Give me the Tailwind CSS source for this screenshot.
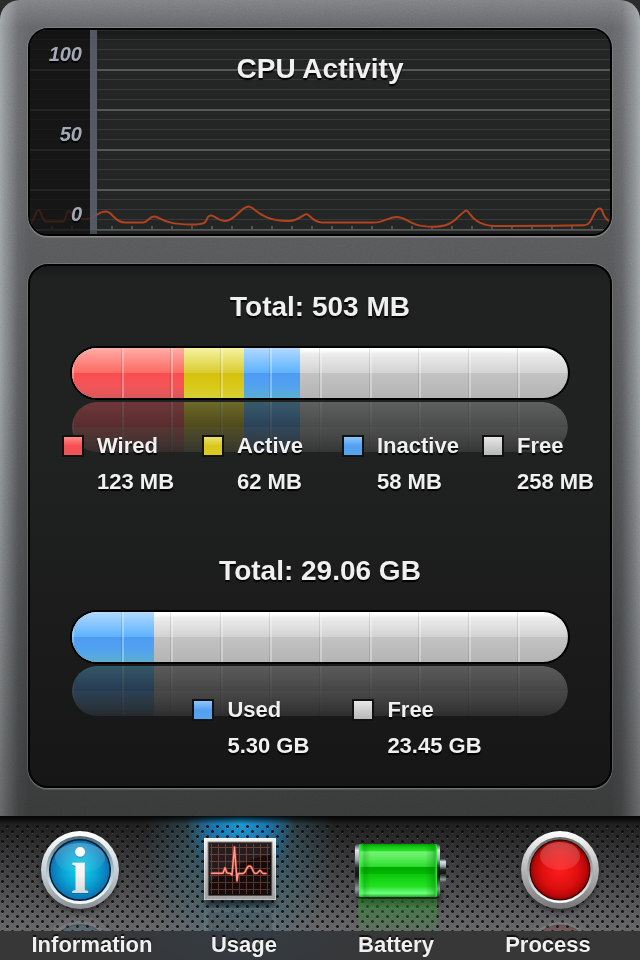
<!DOCTYPE html>
<html lang="en">
<head>
<meta charset="utf-8">
<meta name="viewport" content="width=device-width, initial-scale=1">
<title>Usage</title>
<script src="https://cdn.jsdelivr.net/npm/@tailwindcss/browser@4"></script>
</head>
<body class="flex min-h-screen flex-col bg-[#2c2c2d] font-['Liberation_Sans',Helvetica,Arial,sans-serif] font-bold text-[#f0f0f0]">

<main class="relative flex flex-1 flex-col gap-7 overflow-hidden rounded-t-[20px] bg-[linear-gradient(to_bottom,#808185_0,#646568_28px,#606163_120px,#58595b_250px,#454647_560px,#383939_100%)] p-7">
  <div class="absolute inset-0 bg-[linear-gradient(to_right,rgb(200_208_210/0.62)_0,rgb(190_196_200/0.5)_5px,rgb(150_155_160/0.16)_18px,transparent_30px,transparent_calc(100%-30px),rgb(150_155_160/0.16)_calc(100%-18px),rgb(190_196_200/0.5)_calc(100%-5px),rgb(200_208_210/0.62)_100%)] [mask-image:linear-gradient(to_bottom,#000_45%,rgb(0_0_0/0.5))]"></div>
  <svg class="absolute inset-0 size-full opacity-15 mix-blend-overlay" aria-hidden="true">
    <filter id="grain"><feTurbulence type="fractalNoise" baseFrequency="0.7" numOctaves="2" stitchTiles="stitch"/><feColorMatrix type="saturate" values="0"/></filter>
    <rect width="100%" height="100%" filter="url(#grain)"/>
  </svg>

  <section class="relative overflow-hidden rounded-[20px] border-2 border-black bg-[#242525] shadow-[0_0_0_1px_rgb(255_255_255/0.15),0_2px_0_rgb(255_255_255/0.15)]" aria-labelledby="cpu-title">
    <svg class="block w-full" viewBox="2 2 580 204" role="img" aria-label="CPU activity over time">
      <defs>
        <pattern id="minor" width="584" height="40" patternUnits="userSpaceOnUse" y="1">
          <path d="M0 10.5H584M0 20.5H584M0 30.5H584" stroke="#383939"/>
          <path d="M0 1H584" stroke="#565757" stroke-width="2"/>
        </pattern>
        <pattern id="ticks" x="3" width="20" height="4" y="198" patternUnits="userSpaceOnUse"><rect width="2" height="3" fill="#515252"/></pattern>
        <linearGradient id="topshade" x2="0" y2="1"><stop stop-color="#000" stop-opacity=".35"/><stop offset="1" stop-color="#000" stop-opacity="0"/></linearGradient>
      </defs>
      <rect width="584" height="208" fill="#242525"/>
      <rect y="4" width="584" height="204" fill="url(#minor)"/>
      <rect y="198" width="584" height="3" fill="url(#ticks)"/>
      <rect y="2" width="584" height="1" fill="#444"/>
      <rect y="2" width="584" height="14" fill="url(#topshade)"/>
      <path id="trace" fill="none" stroke="#b1431f" stroke-width="2" stroke-linejoin="round" d="M2 196C6 193 8 182 10.700 182S14 193.500 18 193.500H35C38 193.500 38 183 41 183S44 191 49 191H58C67 191 70 183.500 77.500 183.500C85 183.500 86 194.500 97 194.500H115C120 194.500 121 188.500 126 188.500C133 188.500 134 196.500 163 196.500C181 196.500 177 193 180 189C184 184 189 193 197 193C207 193 213 178.500 220.500 178.500C227 178.500 231 193 261 193C270 193 276 186 278.500 186S285 194.500 294 194.500H346C356 194.500 360 189 368.500 189C380 189 380 198.700 405 198.700C418 198.700 423 195 427 192C432 187 437 182.500 438.700 182.500C441 182.500 445 198 467 198L525 197.800L556 197.200C565 197.500 565 180.500 571.500 180.500C576 180.500 573 188 581 193"/>
      <rect width="62" height="208" fill="#101010" fill-opacity=".72"/>
      <rect x="62" width="7" height="208" fill="#5a5d68" fill-opacity=".92"/>
      <rect y="202" width="584" height="6" fill="#111" fill-opacity=".2"/>
    </svg>
    <div class="absolute inset-y-0 left-0 flex w-[52px] flex-col justify-between pt-1 text-right text-[20px] leading-10 text-[#a3a9b8] italic [text-shadow:0_2px_1px_#000]">
      <span>100</span><span>50</span><span>0</span>
    </div>
    <h2 id="cpu-title" class="absolute inset-x-0 top-[21px] text-center text-[28px] leading-9 [text-shadow:0_2px_1px_#000]">CPU Activity</h2>
  </section>

  <div class="relative flex flex-1 flex-col gap-[53px] rounded-[20px] border-2 border-black bg-[linear-gradient(to_bottom,#191a1a,#202222_14px,#202121_35%,#161616)] pt-[23px] pb-5 shadow-[0_0_0_1px_rgb(255_255_255/0.15),0_2px_0_rgb(255_255_255/0.15)] [text-shadow:0_2px_1px_#000]">
    <section>
      <h2 class="text-center text-[28px] leading-9">Total: 503 MB</h2>
      <div class="relative mx-[42px] mt-[23px]">
        <div class="relative flex h-[50px] overflow-hidden rounded-full bg-[linear-gradient(to_bottom,#fff_0,#fff_4%,#ececec_12%,#d2d2d2_50%,#c3c3c3_50%,#b4b4b4)] shadow-[0_0_0_2px_#000]">
          <div class="bg-[linear-gradient(to_bottom,#ffb0aa,#ff9b95_12%,#fb6c63_50%,#f84e52_50%,#f45558_75%,#d9585c)]" style="width:22.6%"></div>
          <div class="bg-[linear-gradient(to_bottom,#f6f2a4,#efe985_12%,#dbcc30_50%,#d4bf10_50%,#d9c916_75%,#d8cf38)]" style="width:12.1%"></div>
          <div class="bg-[linear-gradient(to_bottom,#b4daff,#9bcfff_12%,#5db3fc_50%,#4d9cf3_50%,#52a2f0_75%,#5aaecf)]" style="width:11.3%"></div>
          <div class="absolute inset-0 bg-[repeating-linear-gradient(to_right,rgb(255_255_255/0.3)_0,rgb(255_255_255/0.3)_2px,transparent_2px,transparent_calc(10%-1px),rgb(0_0_0/0.1)_calc(10%-1px),rgb(0_0_0/0.1)_10%)]"></div>
        </div>
        <div aria-hidden="true" class="absolute inset-x-0 top-full mt-1 flex h-[50px] -scale-y-100 overflow-hidden rounded-full bg-[linear-gradient(to_bottom,#ececec,#d2d2d2_50%,#c3c3c3_50%,#b4b4b4)] [mask-image:linear-gradient(to_top,rgb(0_0_0/0.42),rgb(0_0_0/0.1))]">
          <div class="bg-[linear-gradient(to_bottom,#ff9b95,#fb6c63_50%,#f84e52_50%,#d9585c)]" style="width:22.6%"></div>
          <div class="bg-[linear-gradient(to_bottom,#efe985,#dbcc30_50%,#d4bf10_50%,#d8cf38)]" style="width:12.1%"></div>
          <div class="bg-[linear-gradient(to_bottom,#9bcfff,#5db3fc_50%,#4d9cf3_50%,#5aaecf)]" style="width:11.3%"></div>
          <div class="absolute inset-0 bg-[repeating-linear-gradient(to_right,rgb(255_255_255/0.3)_0,rgb(255_255_255/0.3)_2px,transparent_2px,transparent_calc(10%-1px),rgb(0_0_0/0.1)_calc(10%-1px),rgb(0_0_0/0.1)_10%)]"></div>
        </div>
      </div>
      <dl class="relative mt-[30px] grid grid-cols-[1fr_1fr_1fr_auto] pr-4 pl-8 text-[22px] leading-9">
        <div>
          <dt class="flex items-center gap-[13px]"><span class="size-[22px] border-2 border-[#111] bg-[linear-gradient(to_bottom,#ff9b95,#f84e52_50%,#e85a5c)] bg-origin-border"></span>Wired</dt>
          <dd class="pl-[35px]">123 MB</dd>
        </div>
        <div>
          <dt class="flex items-center gap-[13px]"><span class="size-[22px] border-2 border-[#111] bg-[linear-gradient(to_bottom,#efe985,#d9c61c_50%,#dccb22)] bg-origin-border"></span>Active</dt>
          <dd class="pl-[35px]">62 MB</dd>
        </div>
        <div>
          <dt class="flex items-center gap-[13px]"><span class="size-[22px] border-2 border-[#111] bg-[linear-gradient(to_bottom,#9bcfff,#559ff2_50%,#53a8ee)] bg-origin-border"></span>Inactive</dt>
          <dd class="pl-[35px]">58 MB</dd>
        </div>
        <div>
          <dt class="flex items-center gap-[13px]"><span class="size-[22px] border-2 border-[#111] bg-[linear-gradient(to_bottom,#ececec,#c9c9c9_60%,#b4b4b4)] bg-origin-border"></span>Free</dt>
          <dd class="pl-[35px]">258 MB</dd>
        </div>
      </dl>
    </section>

    <section>
      <h2 class="text-center text-[28px] leading-9">Total: 29.06 GB</h2>
      <div class="relative mx-[42px] mt-[23px]">
        <div class="relative flex h-[50px] overflow-hidden rounded-full bg-[linear-gradient(to_bottom,#fff_0,#fff_4%,#ececec_12%,#d2d2d2_50%,#c3c3c3_50%,#b4b4b4)] shadow-[0_0_0_2px_#000]">
          <div class="bg-[linear-gradient(to_bottom,#b4daff,#9bcfff_12%,#5db3fc_50%,#4d9cf3_50%,#52a2f0_75%,#5aaecf)]" style="width:16.6%"></div>
          <div class="absolute inset-0 bg-[repeating-linear-gradient(to_right,rgb(255_255_255/0.3)_0,rgb(255_255_255/0.3)_2px,transparent_2px,transparent_calc(10%-1px),rgb(0_0_0/0.1)_calc(10%-1px),rgb(0_0_0/0.1)_10%)]"></div>
        </div>
        <div aria-hidden="true" class="absolute inset-x-0 top-full mt-1 flex h-[50px] -scale-y-100 overflow-hidden rounded-full bg-[linear-gradient(to_bottom,#ececec,#d2d2d2_50%,#c3c3c3_50%,#b4b4b4)] [mask-image:linear-gradient(to_top,rgb(0_0_0/0.42),rgb(0_0_0/0.1))]">
          <div class="bg-[linear-gradient(to_bottom,#9bcfff,#5db3fc_50%,#4d9cf3_50%,#5aaecf)]" style="width:16.6%"></div>
          <div class="absolute inset-0 bg-[repeating-linear-gradient(to_right,rgb(255_255_255/0.3)_0,rgb(255_255_255/0.3)_2px,transparent_2px,transparent_calc(10%-1px),rgb(0_0_0/0.1)_calc(10%-1px),rgb(0_0_0/0.1)_10%)]"></div>
        </div>
      </div>
      <dl class="relative mt-[30px] flex justify-center gap-[43px] pl-[34px] text-[22px] leading-9">
        <div>
          <dt class="flex items-center gap-[13px]"><span class="size-[22px] border-2 border-[#111] bg-[linear-gradient(to_bottom,#9bcfff,#559ff2_50%,#53a8ee)] bg-origin-border"></span>Used</dt>
          <dd class="pl-[35px]">5.30 GB</dd>
        </div>
        <div>
          <dt class="flex items-center gap-[13px]"><span class="size-[22px] border-2 border-[#111] bg-[linear-gradient(to_bottom,#ececec,#c9c9c9_60%,#b4b4b4)] bg-origin-border"></span>Free</dt>
          <dd class="pl-[35px]">23.45 GB</dd>
        </div>
      </dl>
    </section>
  </div>
</main>

<nav aria-label="Sections">
  <div class="relative grid grid-cols-4 overflow-hidden bg-[radial-gradient(ellipse_54px_64px_at_37.5%_5%,#1a9bd6,rgb(24_125_190/0.85)_50%,transparent),radial-gradient(ellipse_96px_130px_at_37.5%_30%,rgb(30_110_150/0.7),rgb(60_115_130/0.4)_55%,transparent),linear-gradient(to_bottom,#1a1a1a,#3c3c3e_40%,#68686a)]">
    <svg class="absolute inset-0 size-full" aria-hidden="true">
      <defs>
        <pattern id="mesh" width="10" height="10" patternUnits="userSpaceOnUse" patternTransform="translate(5 8)">
          <path d="M2 4h1v1h-1zM7 9h1v1h-1z" fill="#fff" fill-opacity=".16"/>
          <path d="M1 1h3v3h-3zM6 6h3v3h-3z" fill="#0a0a0a" fill-opacity=".4"/>
          <path d="M2 1h1v3h-1zM1 2h3v1h-3zM7 6h1v3h-1zM6 7h3v1h-3z" fill="#0a0a0a" fill-opacity=".85"/>
        </pattern>
        <linearGradient id="lip" x2="0" y2="1"><stop stop-color="#000" stop-opacity=".9"/><stop offset="1" stop-color="#000" stop-opacity="0"/></linearGradient>
      </defs>
      <rect y="8" width="100%" height="107" fill="url(#mesh)"/>
      <rect width="100%" height="8" fill="url(#lip)"/>
    </svg>

    <a href="#information" aria-labelledby="nav-info" class="relative flex justify-center">
      <svg class="h-[115px] w-40" viewBox="0 0 160 115" aria-hidden="true">
        <defs>
          <linearGradient id="i1" x2="0" y2="1"><stop stop-color="#fff"/><stop offset=".5" stop-color="#c9d2d8"/><stop offset="1" stop-color="#8b8f93"/></linearGradient>
          <linearGradient id="i2" x2="0" y2="1"><stop stop-color="#4d6b78"/><stop offset=".4" stop-color="#8fb4c2"/><stop offset=".75" stop-color="#cfe8f0"/><stop offset="1" stop-color="#f2fcff"/></linearGradient>
          <radialGradient id="i3"><stop stop-color="#12d2ee"/><stop offset=".55" stop-color="#0aa6d6"/><stop offset="1" stop-color="#0a72b2"/></radialGradient>
          <linearGradient id="i4" x2="0" y2="1"><stop stop-color="#fff" stop-opacity=".25"/><stop offset="1" stop-color="#fff" stop-opacity=".03"/></linearGradient>
          <linearGradient id="i5" x2="0" y2="1"><stop stop-color="#fff"/><stop offset=".55" stop-color="#f4f4f4"/><stop offset="1" stop-color="#bfc4c8"/></linearGradient>
          <filter id="soft" x="-30%" y="-30%" width="160%" height="160%"><feGaussianBlur stdDeviation="3"/></filter>
        </defs>
        <circle cx="80" cy="57" r="38" fill="#000" opacity=".6" filter="url(#soft)"/>
        <g id="info-icon">
          <circle cx="80" cy="54" r="39" fill="url(#i1)"/>
          <circle cx="80" cy="54" r="34" fill="url(#i2)"/>
          <circle cx="80" cy="54" r="31" fill="#06182b"/>
          <circle cx="80" cy="54" r="29.500" fill="url(#i3)"/>
          <ellipse cx="80" cy="42" rx="25" ry="15" fill="url(#i4)"/>
          <text x="80" y="78" text-anchor="middle" font-family="Liberation Serif, serif" font-weight="bold" font-size="66" fill="#045a86" opacity=".5">i</text>
          <text x="80" y="77" text-anchor="middle" font-family="Liberation Serif, serif" font-weight="bold" font-size="66" fill="url(#i5)">i</text>
        </g>
        <use href="#info-icon" transform="translate(0 193) scale(1 -1)" opacity=".14"/>
      </svg>
    </a>

    <a href="#usage" aria-labelledby="nav-usage" aria-current="page" class="relative flex justify-center">
      <svg class="h-[115px] w-40" viewBox="0 0 160 115" aria-hidden="true">
        <defs>
          <linearGradient id="u1" x2="0" y2="1"><stop stop-color="#f2f2f2"/><stop offset=".5" stop-color="#c2c2c2"/><stop offset="1" stop-color="#a2a2a2"/></linearGradient>
          <pattern id="ugrid" x="51" y="31" width="7" height="7" patternUnits="userSpaceOnUse"><path d="M.5 0V7M0 .5H7" stroke="#5c322f"/></pattern>
        </defs>
        <rect x="46" y="28" width="68" height="62" fill="#000" opacity=".55" filter="url(#soft)"/>
        <g id="usage-icon">
          <rect x="44" y="22" width="72" height="62" fill="url(#u1)"/>
          <rect x="44.500" y="22.500" width="71" height="61" fill="none" stroke="#fff" stroke-opacity=".4"/>
          <rect x="47.500" y="25.500" width="65" height="54.500" fill="#8a8a8a"/>
          <rect x="48.500" y="26.500" width="63" height="53" fill="#150c0c"/>
          <rect x="50" y="28" width="60" height="50" fill="url(#ugrid)"/>
          <path d="M48.500 26.500h63v12q-34 6-63 28z" fill="#fff" opacity=".07"/>
          <g fill="none" stroke-linejoin="round" stroke-linecap="round">
            <path d="M51.700 57.300H63l2-5.500 2 5.200 3.500.5 1.500 1.500 2.500-28 2.500 34 1-7.500h5c3 0 3-7.500 6.500-7.500s3 7.500 6 7.500 3-3 4.500-3 1.500 3 3.500 3h2.500" stroke="#e0382c" stroke-width="3" opacity=".45"/>
            <path d="M51.700 57.300H63l2-5.500 2 5.200 3.500.5 1.500 1.500 2.500-28 2.500 34 1-7.500h5c3 0 3-7.500 6.500-7.500s3 7.500 6 7.500 3-3 4.500-3 1.500 3 3.500 3h2.500" stroke="#ff9a88" stroke-width="1.500"/>
          </g>
        </g>
        <use href="#usage-icon" transform="translate(0 176) scale(1 -1)" opacity=".1"/>
      </svg>
    </a>

    <a href="#battery" aria-labelledby="nav-battery" class="relative flex justify-center">
      <svg class="h-[115px] w-40" viewBox="0 0 160 115" aria-hidden="true">
        <defs>
          <linearGradient id="b1" x2="0" y2="1"><stop stop-color="#0b9a0b"/><stop offset=".06" stop-color="#12d012"/><stop offset=".12" stop-color="#25dc25"/><stop offset=".15" stop-color="#74f474"/><stop offset=".3" stop-color="#52ea52"/><stop offset=".43" stop-color="#2bdc2b"/><stop offset=".44" stop-color="#00a800"/><stop offset=".56" stop-color="#02b802"/><stop offset=".57" stop-color="#0cc80c"/><stop offset=".8" stop-color="#22e222"/><stop offset=".93" stop-color="#72ff85"/><stop offset="1" stop-color="#11b511"/></linearGradient>
          <linearGradient id="b2"><stop stop-color="#3f4"/><stop offset=".03" stop-color="#3f4" stop-opacity=".2"/><stop offset=".07" stop-color="#050" stop-opacity=".2"/><stop offset=".15" stop-color="#050" stop-opacity="0"/><stop offset=".85" stop-color="#050" stop-opacity="0"/><stop offset=".95" stop-color="#050" stop-opacity=".25"/><stop offset="1" stop-color="#3f4"/></linearGradient>
          <linearGradient id="b3" x2="0" y2="1"><stop stop-color="#3c4446"/><stop offset=".12" stop-color="#dfe6ea"/><stop offset=".3" stop-color="#9aa5aa"/><stop offset=".45" stop-color="#1a2420"/><stop offset=".6" stop-color="#11150f"/><stop offset=".85" stop-color="#8d9a98"/><stop offset="1" stop-color="#343a3a"/></linearGradient>
          <linearGradient id="b4" x2="0" y2="1"><stop stop-color="#2f9e2f" stop-opacity=".5"/><stop offset="1" stop-color="#2fae2f" stop-opacity=".1"/></linearGradient>
        </defs>
        <rect x="38" y="74" width="82" height="13" fill="#000" opacity=".6" filter="url(#soft)"/>
        <rect x="119" y="43" width="7" height="24" rx="2" fill="url(#b3)"/>
        <rect x="35" y="28" width="8" height="53" rx="3" fill="url(#b3)"/>
        <rect x="112" y="28" width="8" height="53" rx="3" fill="url(#b3)"/>
        <rect x="39" y="28" width="78" height="53" rx="2" fill="url(#b1)"/>
        <rect x="39" y="28" width="78" height="53" rx="2" fill="url(#b2)"/>
        <rect x="38" y="83" width="79" height="32" fill="url(#b4)"/>
      </svg>
    </a>

    <a href="#process" aria-labelledby="nav-process" class="relative flex justify-center">
      <svg class="h-[115px] w-40" viewBox="0 0 160 115" aria-hidden="true">
        <defs>
          <linearGradient id="p1" x2="0" y2="1"><stop stop-color="#fff"/><stop offset=".5" stop-color="#b5b5b5"/><stop offset="1" stop-color="#777"/></linearGradient>
          <linearGradient id="p2" x2="0" y2="1"><stop stop-color="#666"/><stop offset=".5" stop-color="#a5a5a5"/><stop offset="1" stop-color="#fff"/></linearGradient>
          <radialGradient id="p3"><stop stop-color="#ff1c1c"/><stop offset=".6" stop-color="#e01010"/><stop offset=".9" stop-color="#b80808"/><stop offset="1" stop-color="#8c0000"/></radialGradient>
          <linearGradient id="p4" x2="0" y2="1"><stop stop-color="#fff" stop-opacity=".25"/><stop offset="1" stop-color="#ff6a6a" stop-opacity=".25"/></linearGradient>
        </defs>
        <circle cx="80" cy="57" r="38" fill="#000" opacity=".6" filter="url(#soft)"/>
        <g id="process-icon">
          <circle cx="80" cy="54" r="39" fill="url(#p1)"/>
          <circle cx="80" cy="54" r="33" fill="url(#p2)"/>
          <circle cx="80" cy="54" r="30.500" fill="#1c0505"/>
          <circle cx="80" cy="54" r="29.500" fill="url(#p3)"/>
          <ellipse cx="80" cy="40" rx="20" ry="14" fill="url(#p4)"/>
        </g>
        <use href="#process-icon" transform="translate(0 193) scale(1 -1)" opacity=".14"/>
      </svg>
    </a>
  </div>
  <div class="grid grid-cols-4 bg-[radial-gradient(ellipse_150px_60px_at_37.5%_0,#343c44,#373737)] px-4 pb-0.5 text-center text-[22px] leading-[27px] [text-shadow:0_-2px_1px_#111]">
    <span id="nav-info">Information</span>
    <span id="nav-usage">Usage</span>
    <span id="nav-battery">Battery</span>
    <span id="nav-process">Process</span>
  </div>
</nav>
</body>
</html>
